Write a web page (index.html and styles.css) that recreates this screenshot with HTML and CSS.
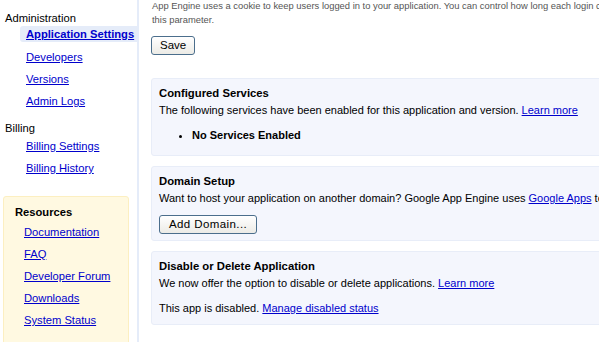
FILE: index.html
```html
<!DOCTYPE html>
<html>
  <head>
    <meta charset="UTF-8" />
    <title>Application Settings</title>
    <link rel="stylesheet" href="styles.css">
  </head>
  <body>
    <div class="page">
      <!-- 左侧导航 -->
      <div class="sidebar">
        <div class="nav-title">Administration</div>
        <ul class="nav-list">
          <li class="active"><a href="#">Application Settings</a></li>
          <li><a href="#">Developers</a></li>
          <li><a href="#">Versions</a></li>
          <li><a href="#">Admin Logs</a></li>
        </ul>

        <div class="nav-title billing">Billing</div>
        <ul class="nav-list billing-list">
          <li><a href="#">Billing Settings</a></li>
          <li><a href="#">Billing History</a></li>
        </ul>

        <div class="resources">
          <div class="resources-title">Resources</div>
          <ul class="resources-list">
            <li><a href="#">Documentation</a></li>
            <li><a href="#">FAQ</a></li>
            <li><a href="#">Developer Forum</a></li>
            <li><a href="#">Downloads</a></li>
            <li><a href="#">System Status</a></li>
          </ul>
        </div>
      </div>

      <!-- 主内容 -->
      <div class="content">
        <p class="hint">
          App Engine uses a cookie to keep users logged in to your application. You can control how long each login cookie stays valid with<br>
          this parameter.
        </p>
        <button class="btn">Save</button>

        <div class="section">
          <div class="section-title">Configured Services</div>
          <div>The following services have been enabled for this application and version. <a href="#">Learn more</a></div>
          <ul class="services">
            <li>No Services Enabled</li>
          </ul>
        </div>

        <div class="section domain">
          <div class="section-title">Domain Setup</div>
          <div>Want to host your application on another domain? Google App Engine uses <a href="#">Google Apps</a> to serve your application on your own domain.</div>
          <button class="btn btn-add">Add Domain...</button>
        </div>

        <div class="section">
          <div class="section-title">Disable or Delete Application</div>
          <div>We now offer the option to disable or delete applications. <a href="#">Learn more</a></div>
          <div class="status">This app is disabled. <a href="#">Manage disabled status</a></div>
        </div>
      </div>
    </div>
  </body>
</html>
```

FILE: styles.css
```css
body {
  margin: 0;
  padding: 0;
  overflow: hidden;
  font-family: "Liberation Sans", Arial, sans-serif;
  font-size: 11px;
  color: #000;
  background: #fff;
}

a {
  color: #0000cc;
}

.page {
  display: flex;
  align-items: flex-start;
  width: 900px;
}

/* 侧边栏 */
.sidebar {
  width: 137px;
  flex-shrink: 0;
  min-height: 342px;
  padding-top: 10px;
  border-right: 2px solid #e5ecf9;
  font-size: 11.2px;
}

.nav-title {
  padding-left: 5px;
  line-height: 16px;
}

.nav-title.billing {
  margin-top: 11px;
}

.nav-list {
  list-style: none;
  margin: 0;
  padding: 0 0 0 20px;
}

.nav-list.billing-list {
  margin-top: 2px;
}

.nav-list li {
  margin: 0;
  padding: 0 0 0 6px;
  line-height: 16px;
  height: 16px;
  white-space: nowrap;
}

.nav-list li + li {
  margin-top: 6px;
}

.nav-list li.active {
  background: #e5ecf9;
  border-radius: 3px 0 0 3px;
  font-weight: bold;
}

.nav-list li.active + li {
  margin-top: 7px;
}

.resources {
  margin: 20px 8px 0 3px;
  padding: 7px 0 12px 0;
  background: #fff9e1;
  border: 1px solid #fcefc1;
  border-radius: 3px;
  min-height: 140px;
}

.resources-title {
  font-weight: bold;
  padding-left: 11px;
  line-height: 16px;
}

.resources-list {
  list-style: none;
  margin: 0;
  padding: 0 0 0 20px;
}

.resources-list li {
  margin-top: 6px;
  line-height: 16px;
}

.resources-list li:first-child {
  margin-top: 4px;
}

/* 主内容 */
.content {
  flex: 1;
  padding-left: 12px;
  white-space: nowrap;
}

.hint {
  margin: -1px 0 0 1px;
  font-size: 9.4px;
  line-height: 14px;
  color: #555;
}

.btn {
  font-family: "Liberation Sans", Arial, sans-serif;
  font-size: 11.5px;
  height: 19px;
  padding: 0 8px;
  margin-top: 9px;
  border: 1px solid #4b6e8c;
  border-radius: 3px;
  background: linear-gradient(#ffffff, #ecebe6);
  color: #000;
  line-height: 15px;
}

.section {
  margin-top: 23px;
  padding: 6px 7px 8px 7px;
  background: #f4f6fd;
  border: 1px solid #e8edf8;
  border-radius: 3px;
  line-height: 16px;
}

.section + .section {
  margin-top: 10px;
}

.section.domain {
  padding-bottom: 6px;
}

.section-title {
  font-weight: bold;
  font-size: 11.3px;
  margin-bottom: 1px;
}

.services {
  margin: 9px 0 4px 0;
  padding-left: 33px;
  font-weight: bold;
}

.btn-add {
  display: block;
  margin-top: 9px;
  padding: 0 9px;
  letter-spacing: 0.4px;
}

.status {
  margin-top: 9px;
}
```
